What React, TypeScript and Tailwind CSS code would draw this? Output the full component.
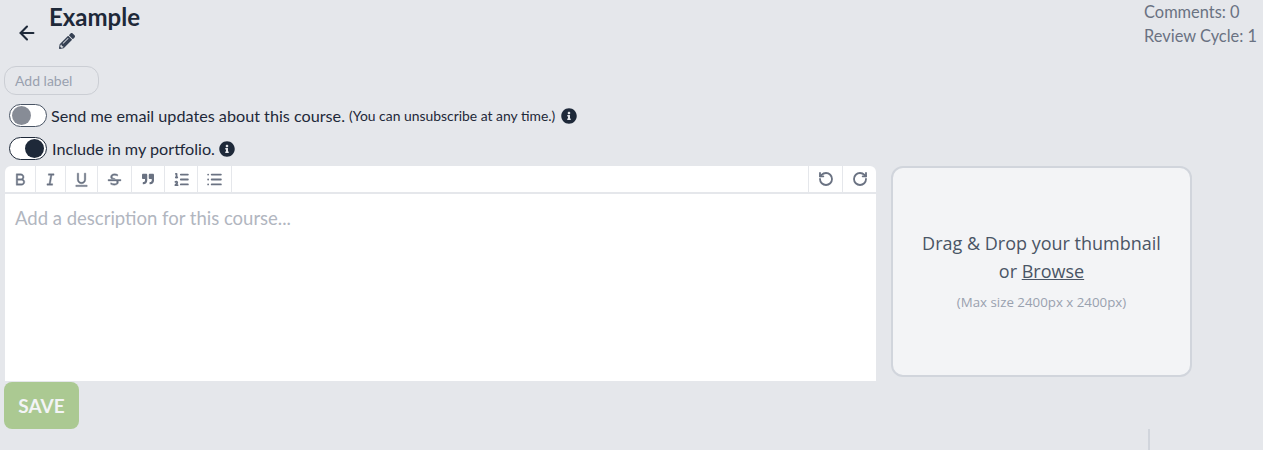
import { ArrowLeft, List, ListOrdered, RotateCcw, RotateCw } from 'lucide-react';
import { FaInfoCircle, FaPencilAlt, FaQuoteRight } from 'react-icons/fa';
import { RiBold, RiItalic, RiStrikethrough, RiUnderline } from 'react-icons/ri';

const heavy = { stroke: 'currentColor', strokeWidth: 0.6 };

const formatTools = [
  { icon: <RiBold className="h-[17px] w-[17px]" {...heavy} />, width: 'w-[31px]' },
  { icon: <RiItalic className="h-[17px] w-[17px]" {...heavy} />, width: 'w-[30px]' },
  { icon: <RiUnderline className="h-[17px] w-[17px]" {...heavy} />, width: 'w-[32px]' },
  { icon: <RiStrikethrough className="h-[17px] w-[17px]" {...heavy} />, width: 'w-[34px]' },
  { icon: <FaQuoteRight className="h-3 w-3" />, width: 'w-[33px]' },
  { icon: <ListOrdered className="h-[17px] w-[17px]" strokeWidth={2.5} />, width: 'w-[33px]' },
  { icon: <List className="h-[17px] w-[17px]" strokeWidth={2.5} />, width: 'w-[34px]' },
];

const Toggle = ({ on }: { on: boolean }) => (
  <span
    className={`flex h-[23px] w-[38px] shrink-0 items-center rounded-full border bg-white px-[2px] ${
      on ? 'justify-end border-gray-800' : 'justify-start border-gray-600'
    }`}
  >
    <span
      className={`h-[19px] w-[19px] rounded-full ${on ? 'bg-gray-800' : 'bg-[#878c96]'}`}
    />
  </span>
);

export default function App() {
  return (
    <div className="h-[450px] w-full overflow-hidden bg-gray-200 font-['Lato',sans-serif] text-gray-800">
      <div className="flex h-[66px] justify-between">
        <div className="flex">
          <div className="ml-4 mt-[22px] w-[33px]">
            <ArrowLeft className="h-[22px] w-[22px]" strokeWidth={2.25} />
          </div>
          <div>
            <h1 className="mt-[2px] h-[30px] text-2xl/[30px] font-bold">Example</h1>
            <FaPencilAlt className="ml-[10px] mt-[1px] h-4 w-4 text-gray-700" />
          </div>
        </div>
        <div className="pr-[6px] text-[16.4px]/[24px] text-gray-500">
          <div>Comments: 0</div>
          <div>Review Cycle: 1</div>
        </div>
      </div>

      <div className="ml-1 flex h-[29px] w-[95px] items-center rounded-xl border border-[#cbced4] pl-[10px] text-sm text-gray-400">
        Add label
      </div>

      <div className="ml-[9px] mt-[9px] flex h-[23px] items-center gap-[4px] text-[16.2px]">
        <Toggle on={false} />
        <span className="pt-px">Send me email updates about this course.</span>
        <span className="pt-px text-[13.9px]">(You can unsubscribe at any time.)</span>
        <FaInfoCircle className="ml-[2px] h-4 w-4" />
      </div>
      <div className="ml-[9px] mt-[10px] flex h-[23px] items-center gap-[4px] text-[16.2px]">
        <Toggle on />
        <span className="pl-px pt-px">Include in my portfolio.</span>
        <FaInfoCircle className="h-4 w-4" />
      </div>

      <div className="mt-[6px] flex items-start">
        <div className="ml-[5px] w-[871px] overflow-hidden rounded-t-md bg-white">
          <div className="flex h-[28px] justify-between border-b-2 border-gray-200">
            <div className="flex">
              {formatTools.map(({ icon, width }, i) => (
                <span
                  key={i}
                  className={`flex items-center justify-center border-r border-gray-200 text-gray-500 ${width}`}
                >
                  {icon}
                </span>
              ))}
            </div>
            <div className="flex">
              <span className="flex w-[34px] items-center justify-center border-l border-gray-200 text-gray-500">
                <RotateCcw className="h-4 w-4" strokeWidth={2.75} />
              </span>
              <span className="flex w-[34px] items-center justify-center border-l border-gray-200 text-gray-500">
                <RotateCw className="h-4 w-4" strokeWidth={2.75} />
              </span>
            </div>
          </div>
          <div className="h-[187px] pl-[10px] pt-[12px] text-[18.5px]/[24px] text-[#b1b6bf]">
            Add a description for this course...
          </div>
        </div>

        <div className="ml-[15px] flex h-[211px] w-[301px] flex-col items-center justify-center rounded-xl border-2 border-gray-300 bg-gray-100 pb-[2px] font-['Open_Sans',sans-serif] text-gray-600">
          <p className="text-center text-lg/[28px]">
            Drag &amp; Drop your thumbnail
            <br />
            or <span className="underline">Browse</span>
          </p>
          <p className="mt-[8px] text-[13.3px] text-gray-400">(Max size 2400px x 2400px)</p>
        </div>
      </div>

      <button className="ml-1 mt-px flex h-[47px] w-[75px] items-center justify-center rounded-lg bg-[#abc992] pt-px text-[19px] font-bold text-gray-100">
        SAVE
      </button>

      <div className="ml-[1148px] h-[21px] border-l-2 border-gray-300" />
    </div>
  );
}
